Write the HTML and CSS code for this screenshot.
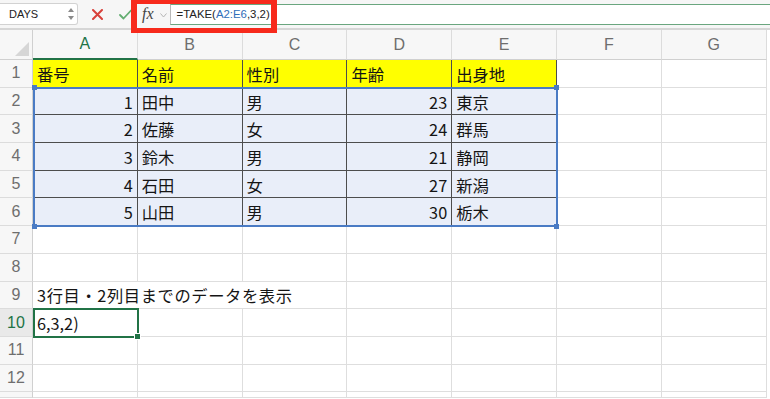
FILE: index.html
```html
<!DOCTYPE html>
<html lang="ja">
<head>
<meta charset="utf-8">
<title>TAKE</title>
<link rel="stylesheet" href="styles.css">
</head>
<body>
<div class="toolbar">
  <div class="namebox"><span>DAYS</span>
    <svg class="stepper" width="6" height="14" viewBox="0 0 6 14"><path d="M3 1 L6 5 L0 5 Z M0 9 L6 9 L3 13 Z" fill="#8a8a8a"/></svg>
  </div>
  <svg class="cancel" width="11" height="11" viewBox="0 0 11 11"><path d="M1 1 L10 10 M10 1 L1 10" stroke="#d8403a" stroke-width="2" stroke-linecap="round"/></svg>
  <svg class="enter" width="13" height="11" viewBox="0 0 13 11"><path d="M1 6 L4.5 9.5 L12 1.5" fill="none" stroke="#62ad70" stroke-width="1.8" stroke-linecap="round" stroke-linejoin="round"/></svg>
  <span class="fx">fx</span>
  <svg class="chev" width="7" height="5" viewBox="0 0 7 5"><path d="M0.5 0.5 L3.5 4 L6.5 0.5" fill="none" stroke="#b5b5b5" stroke-width="1"/></svg>
  <div class="formula">=TAKE(<span class="ref-txt">A2:E6</span>,3,2)<span class="caret"></span></div>
</div>

<div class="wrap">
<div class="sheet">
  <div class="corner"><svg width="14" height="14" viewBox="0 0 14 14"><path d="M14 0 L14 14 L0 14 Z" fill="#d6d6d6"/></svg></div>
  <div class="ch sel">A</div><div class="ch">B</div><div class="ch">C</div><div class="ch">D</div><div class="ch">E</div><div class="ch">F</div><div class="ch">G</div>

  <div class="rh">1</div><div class="c t y">番号</div><div class="c t y">名前</div><div class="c t y">性別</div><div class="c t y">年齢</div><div class="c t y">出身地</div><div class="c"></div><div class="c"></div>
  <div class="rh">2</div><div class="c t hl n">1</div><div class="c t hl">田中</div><div class="c t hl">男</div><div class="c t hl n">23</div><div class="c t hl">東京</div><div class="c"></div><div class="c"></div>
  <div class="rh">3</div><div class="c t hl n">2</div><div class="c t hl">佐藤</div><div class="c t hl">女</div><div class="c t hl n">24</div><div class="c t hl">群馬</div><div class="c"></div><div class="c"></div>
  <div class="rh">4</div><div class="c t hl n">3</div><div class="c t hl">鈴木</div><div class="c t hl">男</div><div class="c t hl n">21</div><div class="c t hl">静岡</div><div class="c"></div><div class="c"></div>
  <div class="rh">5</div><div class="c t hl n">4</div><div class="c t hl">石田</div><div class="c t hl">女</div><div class="c t hl n">27</div><div class="c t hl">新潟</div><div class="c"></div><div class="c"></div>
  <div class="rh">6</div><div class="c t hl n">5</div><div class="c t hl">山田</div><div class="c t hl">男</div><div class="c t hl n">30</div><div class="c t hl">栃木</div><div class="c"></div><div class="c"></div>
  <div class="rh">7</div><div class="c"></div><div class="c"></div><div class="c"></div><div class="c"></div><div class="c"></div><div class="c"></div><div class="c"></div>
  <div class="rh">8</div><div class="c"></div><div class="c"></div><div class="c"></div><div class="c"></div><div class="c"></div><div class="c"></div><div class="c"></div>
  <div class="rh">9</div><div class="c span3 note">3行目・2列目までのデータを表示</div><div class="c"></div><div class="c"></div><div class="c"></div><div class="c"></div>
  <div class="rh sel">10</div><div class="c">6,3,2)</div><div class="c"></div><div class="c"></div><div class="c"></div><div class="c"></div><div class="c"></div><div class="c"></div>
  <div class="rh">11</div><div class="c"></div><div class="c"></div><div class="c"></div><div class="c"></div><div class="c"></div><div class="c"></div><div class="c"></div>
  <div class="rh">12</div><div class="c"></div><div class="c"></div><div class="c"></div><div class="c"></div><div class="c"></div><div class="c"></div><div class="c"></div>
  <div class="rh"></div><div class="c"></div><div class="c"></div><div class="c"></div><div class="c"></div><div class="c"></div><div class="c"></div><div class="c"></div>
</div>
<div class="overlay">
  <div class="refbox"><i class="k tl"></i><i class="k tr"></i><i class="k bl"></i><i class="k br"></i></div>
  <div class="active"><i class="handle"></i></div>
</div>
</div>

<div class="annot"></div>
</body>
</html>
```

FILE: styles.css
```css
html, body {
  margin: 0;
  padding: 0;
}
body {
  width: 770px;
  height: 399px;
  overflow: hidden;
  background: #fff;
  position: relative;
  font-family: "Noto Sans CJK JP", "Noto Sans", sans-serif;
}

/* formula bar */
.toolbar {
  height: 28px;
  background: #f6f6f6;
  border-bottom: 2px solid #d6d6d6;
  display: flex;
  align-items: center;
}
.namebox {
  width: 78px;
  height: 22px;
  box-sizing: border-box;
  background: #fff;
  border: 1px solid #d2d2d2;
  border-left: none;
  border-radius: 0 3px 3px 0;
  display: flex;
  align-items: center;
  justify-content: space-between;
  padding: 0 3px 0 9px;
  font-family: "Liberation Sans", Arial, sans-serif;
  font-size: 11px;
  color: #222;
}
.cancel { margin-left: 14px; }
.enter { margin-left: 16px; }
.fx {
  margin-left: 10px;
  font-family: "Liberation Serif", serif;
  font-style: italic;
  font-size: 16px;
  color: #444;
  line-height: 1;
}
.chev { margin-left: 6px; margin-top: 2px; }
.formula {
  margin-left: 3px;
  flex: 1;
  height: 21px;
  box-sizing: border-box;
  background: #fff;
  border-top: 1px solid #6aa67f;
  border-bottom: 1px solid #6aa67f;
  border-left: 1px solid #b9b9b9;
  padding-left: 6px;
  display: flex;
  align-items: center;
  font-family: "Liberation Sans", Arial, sans-serif;
  font-size: 11.4px;
  color: #222;
  white-space: nowrap;
}
.ref-txt { color: #2f6db8; }
.caret {
  display: inline-block;
  width: 0;
  height: 14px;
  border-left: 1px solid #111;
  margin-left: 2px;
}

/* sheet */
.wrap { position: relative; }
.sheet, .overlay {
  display: grid;
  grid-template-columns: 33px repeat(7, 104.8px);
  grid-template-rows: 30px repeat(12, 27.7px) 6px;
}
.sheet { overflow: hidden; }
.overlay {
  position: absolute;
  left: 0;
  top: 0;
  pointer-events: none;
}
.sheet > div { box-sizing: border-box; min-width: 0; min-height: 0; }
.corner {
  background: #f7f7f7;
  border-right: 1px solid #d0d0d0;
  border-bottom: 1px solid #d0d0d0;
  display: flex;
  align-items: flex-end;
  justify-content: flex-end;
  padding: 0 3px 3px 0;
}
.ch {
  background: #f7f7f7;
  border-right: 1px solid #dcdcdc;
  border-bottom: 1px solid #d0d0d0;
  display: flex;
  align-items: center;
  justify-content: center;
  font-family: "Liberation Sans", Arial, sans-serif;
  font-size: 16px;
  color: #6e6e6e;
}
.ch.sel {
  color: #217346;
  border-bottom: 2px solid #217346;
}
.rh {
  background: #f7f7f7;
  border-right: 1px solid #d0d0d0;
  border-bottom: 1px solid #dcdcdc;
  display: flex;
  align-items: center;
  justify-content: center;
  font-family: "Liberation Sans", Arial, sans-serif;
  font-size: 16px;
  color: #6e6e6e;
}
.rh.sel {
  background: #e9e9e9;
  color: #217346;
}
.c {
  border-right: 1px solid #dedede;
  border-bottom: 1px solid #dedede;
  padding: 1px 4px 0 4px;
  display: flex;
  align-items: center;
  white-space: nowrap;
  font-size: 16.3px;
  color: #151515;
}
.c.t { border-right-color: #4d4d4d; border-bottom-color: #4d4d4d; }
.c.y { background: #ffff00; }
.c.hl { background: #e9eef9; }
.c.n { justify-content: flex-end; }
.c.span3 { grid-column: span 3; }
.c.note { letter-spacing: 0.6px; }

/* reference highlight of A2:E6 */
.refbox {
  grid-column: 2 / 7;
  grid-row: 3 / 8;
  box-sizing: border-box;
  border: 2px solid #4a7bc4;
  margin: -1px -1px -1px 0;
  position: relative;
}
.k {
  position: absolute;
  width: 5px;
  height: 5px;
  background: #4a7bc4;
}
.k.tl { left: -3.5px; top: -3.5px; }
.k.tr { right: -3.5px; top: -3.5px; }
.k.bl { left: -3.5px; bottom: -3.5px; }
.k.br { right: -3.5px; bottom: -3.5px; }

/* active cell A10 */
.active {
  grid-column: 2 / 3;
  grid-row: 11 / 12;
  box-sizing: border-box;
  border: 2px solid #217346;
  margin: -1px -1px -1px 0;
  position: relative;
}
.handle {
  position: absolute;
  right: -4px;
  bottom: -4px;
  width: 5px;
  height: 5px;
  background: #217346;
  border: 1px solid #fff;
}

/* red annotation box */
.annot {
  position: absolute;
  left: 131px;
  top: 0;
  width: 146px;
  height: 33px;
  box-sizing: border-box;
  border-style: solid;
  border-color: #f72a1c;
  border-width: 4px 6px 5px 6px;
  z-index: 10;
}
```
